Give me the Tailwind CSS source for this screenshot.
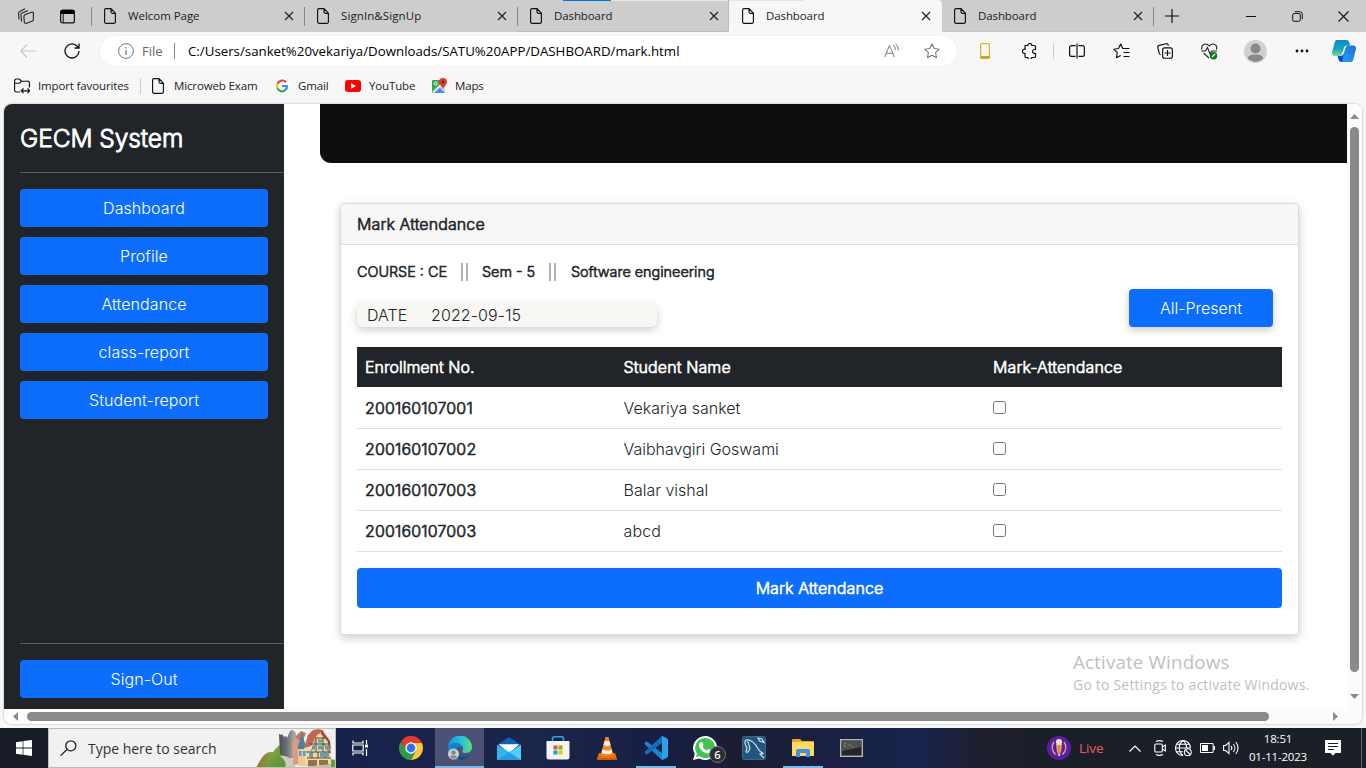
<!DOCTYPE html>
<html lang="en">
<head>
<meta charset="utf-8">
<title>Dashboard</title>
<script src="https://cdn.jsdelivr.net/npm/@tailwindcss/browser@4"></script>
</head>
<body class="w-[1366px] h-[768px] overflow-hidden bg-[#f7f7f7] font-['Open_Sans','Noto_Sans',sans-serif] text-[#1b1b1b] whitespace-nowrap">
<svg class="hidden">
  <symbol id="page" viewBox="0 0 12 16"><path d="M2 .6h5l4.400 4.600v8.600a1.500 1.500 0 0 1-1.500 1.600H2.100A1.500 1.500 0 0 1 .6 13.800V2.100A1.500 1.500 0 0 1 2 .6zM7 .8v3a1.500 1.500 0 0 0 1.500 1.500h2.800" fill="none" stroke="#111" stroke-width="1.150"/></symbol>
  <symbol id="x" viewBox="0 0 10 10"><path d="M1 1l8 8M9 1l-8 8" fill="none" stroke="#222" stroke-width="1.200"/></symbol>
</svg>
<div class="h-screen flex flex-col">
  <!-- tab strip -->
  <div class="relative h-8 flex shrink-0 bg-[#cdcdcd] text-[11.500px]">
    <div class="absolute left-[563px] top-0 w-[241px] h-px bg-[#e5e5e5]"><div class="w-12 h-px bg-[#0078d7]"></div></div>
    <div class="w-[91px] flex items-center pl-[18px] gap-[26px]">
      <svg class="w-4 h-4" viewBox="0 0 16 16" fill="none" stroke="#222" stroke-width="1.100"><path d="M1 11.500L.6 5.500C.5 4.500 1 3.800 1.800 3.400L7 .8M3.600 13.500L3 7c-.1-1 .4-1.700 1.200-2L10 2.500"/><path d="M7.300 6.500l6.200-2.300c1-.3 2 .2 2 1.200l-.2 6c0 .8-.5 1.500-1.300 1.800l-5.500 2c-1.200.4-2.100-.2-2.200-1.200l-.4-5.300c0-1 .5-1.800 1.400-2.200z"/></svg>
      <svg class="w-[15px] h-[15px]" viewBox="0 0 15 15"><rect x=".6" y="1.100" width="13.800" height="12.800" rx="2" fill="none" stroke="#111" stroke-width="1.200"/><path d="M.6 5V3A2 2 0 0 1 2.600 1h9.800a2 2 0 0 1 2 2v2z" fill="#000"/><path d="M3.200 5v8.500" stroke="#111"/></svg>
    </div>
    <div class="w-[213px] relative flex items-center pl-[13px] pr-[10px] before:absolute before:left-0 before:top-[7px] before:w-px before:h-[19px] before:bg-[#888]"><svg class="w-3 h-4"><use href="#page"/></svg><span class="ml-3 flex-1 tracking-[-.05px]">Welcom Page</span><svg class="w-[10px] h-[10px]"><use href="#x"/></svg></div>
    <div class="w-[213px] relative flex items-center pl-[13px] pr-[10px] before:absolute before:left-0 before:top-[7px] before:w-px before:h-[19px] before:bg-[#888]"><svg class="w-3 h-4"><use href="#page"/></svg><span class="ml-3 flex-1 tracking-[.1px]">SignIn&amp;SignUp</span><svg class="w-[10px] h-[10px]"><use href="#x"/></svg></div>
    <div class="w-[212px] relative flex items-center pl-[13px] pr-[9px] rounded-br-[4px] border-r border-b border-[#bbb] before:absolute before:left-0 before:top-[7px] before:w-px before:h-[19px] before:bg-[#888]"><svg class="w-3 h-4"><use href="#page"/></svg><span class="ml-3 flex-1 tracking-[-.1px]">Dashboard</span><svg class="w-[10px] h-[10px]"><use href="#x"/></svg></div>
    <div class="w-[213px] flex items-center pl-[13px] pr-[11px] bg-[#f7f7f7] rounded-t-[4px]"><svg class="w-3 h-4"><use href="#page"/></svg><span class="ml-3 flex-1 tracking-[-.1px]">Dashboard</span><svg class="w-[10px] h-[10px]"><use href="#x"/></svg></div>
    <div class="w-[212px] flex items-center pl-3 pr-[11px] border-b border-[#c4c4c4]"><svg class="w-3 h-4"><use href="#page"/></svg><span class="ml-3 flex-1 tracking-[-.1px]">Dashboard</span><svg class="w-[10px] h-[10px]"><use href="#x"/></svg></div>
    <div class="flex-1 flex items-center relative before:absolute before:left-[-1px] before:top-[7px] before:w-px before:h-[19px] before:bg-[#888]">
      <svg class="ml-[11px] w-[14px] h-[14px]" viewBox="0 0 14 14"><path d="M7 0v14M0 7h14" stroke="#111" stroke-width="1.200"/></svg>
      <svg class="ml-[67px] w-[10px] h-[10px]" viewBox="0 0 10 10"><path d="M0 5.500h10" stroke="#111"/></svg>
      <svg class="ml-9 w-[11px] h-[11px]" viewBox="0 0 11 11" fill="none" stroke="#111"><rect x=".7" y="2.500" width="7.600" height="7.800" rx="1.500"/><path d="M2.800 .7h5A2.500 2.500 0 0 1 10.300 3.200v5"/></svg>
      <svg class="ml-[35px] w-[11px] h-[11px]" viewBox="0 0 11 11"><path d="M.5.5l10 10M10.500.5l-10 10" stroke="#111" stroke-width="1.100"/></svg>
    </div>
  </div>
  <!-- address row -->
  <div class="h-[38px] shrink-0 flex items-center">
    <svg class="ml-5 w-4 h-[14px]" viewBox="0 0 16 14" fill="none" stroke="#c6c6c6" stroke-width="1.100"><path d="M7 .5L.8 7 7 13.500M.8 7H16"/></svg>
    <svg class="ml-[28px] w-4 h-4" viewBox="0 0 16 16" fill="none" stroke="#111" stroke-width="1.300"><path d="M15 8a7 7 0 1 1-2.300-5.200L15 5M15 .5V5h-4.500"/></svg>
    <div class="ml-5 w-[857px] h-[30px] rounded-full bg-white shadow-[0_0_2px_rgba(0,0,0,.08)] flex items-center">
      <svg class="ml-[18px] w-4 h-4" viewBox="0 0 16 16" fill="none" stroke="#767676"><circle cx="8" cy="8" r="7.400"/><path d="M8 7v5M8 4v1.500" stroke-width="1.300"/></svg>
      <span class="ml-2 w-[21px] text-[13px] pt-px text-[#666]">File</span>
      <span class="ml-[11px] w-px h-4 bg-[#888]"></span>
      <span class="ml-[13px] flex-1 pt-px text-[13.300px] tracking-[-.01px] text-black">C:/Users/sanket%20vekariya/Downloads/SATU%20APP/DASHBOARD/mark.html</span>
      <svg class="w-4 h-4" viewBox="0 0 16 16" fill="none" stroke="#777"><path d="M.6 14L5.500 2.500 10.400 14M2.200 10.300h6.600M9.500 2.300a5 5 0 0 1 1.800 4.500M11.700.9a8 8 0 0 1 2.500 6.500"/></svg>
      <svg class="ml-6 mr-[17px] w-4 h-4" viewBox="0 0 16 16" fill="none" stroke="#777" stroke-width="1.100"><path d="M8 .9l2.200 4.600 5 .7-3.600 3.500.9 5L8 12.300l-4.500 2.400.9-5L.8 6.200l5-.7z" stroke-linejoin="round"/></svg>
    </div>
    <svg class="ml-[23px] w-[10px] h-4" viewBox="0 0 10 16"><rect x=".6" y=".6" width="8.800" height="14.800" rx="1" fill="none" stroke="#dcb32c" stroke-width="1.200"/><path d="M.6 13h8.800v2.500H.6z" fill="#cfa21b"/></svg>
    <svg class="ml-[32px] w-[15px] h-4" viewBox="0 0 15 16" fill="none" stroke="#111" stroke-width="1.200"><path d="M3 2.500h2.800a2 2 0 0 1 4 0H12.500a1 1 0 0 1 1 1v3h-1a1.900 1.900 0 0 0 0 3.800h1v3.200a1 1 0 0 1-1 1H9.800a2 2 0 0 1-4 0H4a1 1 0 0 1-1-1v-3.200a2 2 0 1 1 0-3.800z" stroke-linejoin="round"/></svg>
    <span class="ml-4 w-px h-4 bg-[#ccc]"></span>
    <svg class="ml-[15px] w-4 h-4" viewBox="0 0 16 16" fill="none" stroke="#111" stroke-width="1.200"><path d="M6.500 2.600h-4A1.900 1.900 0 0 0 .6 4.500v7a1.900 1.900 0 0 0 1.900 1.900h4M9.500 2.600h4a1.900 1.900 0 0 1 1.900 1.900v7a1.900 1.900 0 0 1-1.900 1.900h-4M8 .5v15"/></svg>
    <svg class="ml-[28px] w-[17px] h-4" viewBox="0 0 17 16" fill="none" stroke="#111" stroke-width="1.150"><path d="M10.500 5.500H9.800L7.700 1 5.500 5.500.8 6.200l3.500 3.500-.9 5 4.300-2.300M10.500 5.500H16.500M10.500 9.500h6M10.500 13.500h6" stroke-linejoin="round"/></svg>
    <svg class="ml-[27px] w-4 h-4" viewBox="0 0 16 16" fill="none" stroke="#111" stroke-width="1.150"><rect x="5.600" y="4.800" width="9.800" height="10.400" rx="2"/><path d="M10.500 7v6M7.500 10h6M3.500 12L2.300 10.500.8 4.500C.6 3.500 1 2.700 2 2.400L9 .7c1-.2 2 .3 2.300 1.400v.7"/></svg>
    <svg class="ml-7 w-[17px] h-[17px]" viewBox="0 0 17 17" fill="none" stroke="#222" stroke-width="1.100"><path d="M1 6.500C0 3.500 2 1 4.500 1 6.500 1 7.500 2 8.300 3 9 2 10.200 1 12.200 1c2.500 0 4.300 2.500 3.300 5.500M0 8h4.500L6.500 4.500 9 11l1.800-3H16M2.500 10L8 15"/><circle cx="12.500" cy="12.700" r="3.700" fill="#107c10" stroke="none"/><path d="M11 14l3-3" stroke="#fff" stroke-width="1.300"/></svg>
    <svg class="ml-[26px] w-[23px] h-[23px]" viewBox="0 0 23 23"><circle cx="11.500" cy="11.500" r="11.500" fill="#d2d0ce"/><circle cx="11.500" cy="8.500" r="5" fill="#8a8886"/><path d="M3.700 18.200C5 15 8 14.500 11.500 14.500S18 15 19.300 18.200c-4 4.600-11.600 4.600-15.600 0z" fill="#8a8886"/></svg>
    <svg class="ml-7 w-[14px] h-1" viewBox="0 0 14 4" fill="#111"><circle cx="2" cy="2" r="1.400"/><circle cx="7" cy="2" r="1.400"/><circle cx="12" cy="2" r="1.400"/></svg>
    <svg class="ml-[23px] w-6 h-[22px]" viewBox="0 0 24 22"><defs><linearGradient id="ca" x2="0" y2="1"><stop stop-color="#0c85cf"/><stop offset=".55" stop-color="#14a6b8"/><stop offset="1" stop-color="#74dc8e"/></linearGradient><linearGradient id="cb" x1="1" x2="0" y2="1"><stop stop-color="#2468e0"/><stop offset="1" stop-color="#17b1ef"/></linearGradient></defs><path d="M5 0h9c2 0 3 1 3.500 3l.7 2.500h-3C13 5.500 12.200 6.500 11.600 9L10 14c-.6 1.600-1.500 2-3 2H3C.5 16-.4 14.500.2 12L2.500 3C3 1 3.700 0 5 0z" fill="url(#ca)"/><path d="M19 22h-9c-2 0-3-1-3.500-3L5.800 16h2.500c2 0 3-1 3.700-3.500L13.500 8c.6-1.700 1.500-2.500 3-2.500H21c2.500 0 3.400 1.500 2.800 4L21.500 19c-.5 2-1.200 3-2.500 3z" fill="url(#cb)"/><path d="M5.800 16h2.500c1.500 0 2.500-.6 3.200-2L10.300 22C8 22 7 21 6.500 19z" fill="#1744c9"/></svg>
  </div>
  <!-- bookmarks -->
  <div class="h-[34px] shrink-0 flex items-center pb-[3px] text-[11.500px] tracking-[-.14px]">
    <svg class="ml-[14px] w-4 h-4" viewBox="0 0 16 16" fill="none" stroke="#111" stroke-width="1.150"><path d="M6 14H2.500A1.900 1.900 0 0 1 .6 12V3A1.900 1.900 0 0 1 2.500 1h2.800L7.500 3.200h6A1.900 1.900 0 0 1 15.400 5v4.500M.6 5.200h5L7.500 3.200M7.500 12.800h8M9.500 10.500l-2.300 2.300L9.500 15M13.500 10.500l2.200 2.300L13.500 15"/></svg>
    <span class="ml-2 w-[92px]">Import favourites</span><span class="ml-[10px] w-px h-4 bg-[#ccc]"></span>
    <svg class="ml-[11px] w-3 h-4"><use href="#page"/></svg><span class="ml-[10px] w-[84px]">Microweb Exam</span>
    <svg class="ml-4 w-4 h-4" viewBox="0 0 16 16"><circle cx="8" cy="8" r="8" fill="#fff"/><g fill="none" stroke-width="2.200"><path d="M12.100 4.200A5.200 5.200 0 0 0 3.500 5.700" stroke="#ea4335"/><path d="M3.500 5.700a5 5 0 0 0 0 4.600" stroke="#fbbc05"/><path d="M3.500 10.300a5 5 0 0 0 7.900 1.700" stroke="#34a853"/><path d="M11.400 12A5 5 0 0 0 12.900 8H8" stroke="#4285f4"/></g></svg>
    <span class="ml-2 w-[30px]">Gmail</span>
    <svg class="ml-[17px] w-4 h-3" viewBox="0 0 16 12"><rect width="16" height="12" rx="3" fill="#f00"/><path d="M6 3.200v5.600L11 6z" fill="#fff"/></svg>
    <span class="ml-2 w-[46px]">YouTube</span>
    <svg class="ml-[17px] w-[15px] h-4" viewBox="0 0 15 16"><rect y="2" width="13" height="13" rx="1" fill="#34a853"/><path d="M1 15l6-6 6 6z" fill="#4a88f0"/><path d="M0 14L12 2.500l1.500 2L2 15z" fill="#e9e5d8"/><path d="M7 9l6 6V9l-3-2z" fill="#c9d4e4"/><circle cx="3.700" cy="5.500" r="1.500" fill="none" stroke="#fff"/><path d="M11 0a4 4 0 0 1 4 4c0 2.500-2.700 3.500-4 7-1.300-3.500-4-4.500-4-7a4 4 0 0 1 4-4z" fill="#e33b2e"/><circle cx="11" cy="4" r="1.400" fill="#8b1a12"/></svg>
    <span class="ml-2">Maps</span>
  </div>
  <!-- web view -->
  <div class="ml-1 w-[1358px] h-[620px] shrink-0 rounded-lg overflow-hidden bg-[#fcfcfc] shadow-[0_0_2px_1px_rgba(0,0,0,.13)] flex flex-col font-['Inter',sans-serif] font-light text-base text-[#212529]">
    <div class="h-[605px] flex">
      <aside class="w-[280px] bg-[#212529] pl-4 flex flex-col text-white">
        <h1 class="h-[68px] pt-4 text-[24.500px] leading-9 tracking-[-.07px] [-webkit-text-stroke:.9px_white]">GECM System</h1>
        <div class="h-px bg-[#5b5e61]"></div>
        <nav class="mt-4 mr-4 flex flex-col gap-[10px] text-center leading-[38px] tracking-[.08px] flex-1">
          <a class="h-[38px] rounded bg-[#0d6efd]">Dashboard</a>
          <a class="h-[38px] rounded bg-[#0d6efd]">Profile</a>
          <a class="h-[38px] rounded bg-[#0d6efd]">Attendance</a>
          <a class="h-[38px] rounded bg-[#0d6efd]">class-report</a>
          <a class="h-[38px] rounded bg-[#0d6efd]">Student-report</a>
        </nav>
        <div class="h-px bg-[#5b5e61]"></div>
        <a class="mt-4 mr-4 mb-[11px] h-[38px] rounded bg-[#0d6efd] text-center leading-[38px] tracking-[.08px]">Sign-Out</a>
      </aside>
      <main class="w-[1063px] bg-white">
        <div class="ml-9 h-[59px] rounded-bl-[11px] bg-[#0c0f0e]"></div>
        <section class="ml-14 mt-10 w-[959px] h-[432px] border border-[#dcdcdc] rounded bg-white shadow-[0_3px_10px_rgba(0,0,0,.2)]">
          <header class="h-[41px] px-4 leading-10 bg-[#f7f7f7] border-b border-[#dcdcdc] rounded-t tracking-[.09px] [-webkit-text-stroke:.65px]">Mark Attendance</header>
          <div class="px-4">
            <div class="mt-4 h-[22px] flex items-center text-[14.400px] [-webkit-text-stroke:.6px]">
              <span class="w-[90px]">COURSE : CE</span>
              <span class="ml-[14px] w-[7px] h-[18px] border-x-2 border-[#b2b2b2]"></span>
              <span class="ml-[14px] w-[53px]">Sem - 5</span>
              <span class="ml-[14px] w-[7px] h-[18px] border-x-2 border-[#b2b2b2]"></span>
              <span class="ml-[15px]">Software engineering</span>
            </div>
            <div class="h-[64px] flex justify-between">
              <div class="mt-5 w-[300px] h-6 rounded-md bg-[#f8f7f3] shadow-[0_3px_8px_rgba(0,0,0,.2)] pl-[10px] flex leading-6"><span class="w-[64px]">DATE</span><span class="tracking-[.1px]">2022-09-15</span></div>
              <button class="mt-[6px] mr-[9px] w-[144px] h-[38px] rounded bg-[#0d6efd] text-white shadow-[0_3px_8px_rgba(0,0,0,.2)]">All-Present</button>
            </div>
            <div class="grid grid-cols-[258.500px_369.500px_1fr] items-center">
              <div class="contents text-white tracking-[.1px] [-webkit-text-stroke:.65px_white]"><div class="h-10 leading-10 pl-2 bg-[#212529] tracking-normal">Enrollment No.</div><div class="h-10 leading-10 pl-2 bg-[#212529]">Student Name</div><div class="h-10 leading-10 pl-2 bg-[#212529]">Mark-Attendance</div></div>
              <div class="h-[42px] leading-[42px] pl-2 border-b border-[#dee2e6] tracking-[.15px] [-webkit-text-stroke:.65px]">200160107001</div><div class="h-[42px] leading-[42px] pl-2 border-b border-[#dee2e6]">Vekariya sanket</div><div class="h-[42px] pl-2 flex items-center border-b border-[#dee2e6]"><input type="checkbox" class="w-[13px] h-[13px]"></div>
              <div class="h-[41px] leading-10 pl-2 border-b border-[#dee2e6] tracking-[.15px] [-webkit-text-stroke:.65px]">200160107002</div><div class="h-[41px] leading-10 pl-2 border-b border-[#dee2e6]">Vaibhavgiri Goswami</div><div class="h-[41px] pl-2 pb-px flex items-center border-b border-[#dee2e6]"><input type="checkbox" class="w-[13px] h-[13px]"></div>
              <div class="h-[41px] leading-10 pl-2 border-b border-[#dee2e6] tracking-[.15px] [-webkit-text-stroke:.65px]">200160107003</div><div class="h-[41px] leading-10 pl-2 border-b border-[#dee2e6]">Balar vishal</div><div class="h-[41px] pl-2 pb-px flex items-center border-b border-[#dee2e6]"><input type="checkbox" class="w-[13px] h-[13px]"></div>
              <div class="h-[41px] leading-10 pl-2 border-b border-[#dee2e6] tracking-[.15px] [-webkit-text-stroke:.65px]">200160107003</div><div class="h-[41px] leading-10 pl-2 border-b border-[#dee2e6] tracking-[.15px]">abcd</div><div class="h-[41px] pl-2 pb-px flex items-center border-b border-[#dee2e6]"><input type="checkbox" class="w-[13px] h-[13px]"></div>
            </div>
            <button class="mt-4 w-full h-10 rounded bg-[#0d6efd] text-white tracking-[.09px] [-webkit-text-stroke:.65px_white]">Mark Attendance</button>
          </div>
        </section>
        <div class="absolute left-[1073px] top-[651px] font-['Open_Sans'] font-normal text-[#c0c0c0]">
          <p class="text-[18.800px] leading-[22px] tracking-[.15px]">Activate Windows</p>
          <p class="text-[14px] leading-[23px] tracking-[.2px]">Go to Settings to activate Windows.</p>
        </div>
      </main>
      <div class="w-[15px] flex flex-col items-center bg-[#fcfcfc]">
        <svg class="mt-[10px] w-[9px] h-[5px]" viewBox="0 0 9 5"><path d="M0 5L4.500 0 9 5z" fill="#8a8a8a"/></svg>
        <div class="mt-2 w-[9px] h-[545px] rounded-full bg-[#8a8a8a]"></div>
        <svg class="mt-[22px] w-[9px] h-[5px]" viewBox="0 0 9 5"><path d="M0 0L4.500 5 9 0z" fill="#8a8a8a"/></svg>
      </div>
    </div>
    <div class="h-[15px] flex items-center">
      <svg class="ml-[9px] w-[5px] h-[9px]" viewBox="0 0 5 9"><path d="M5 0L0 4.500 5 9z" fill="#8a8a8a"/></svg>
      <div class="ml-[9px] w-[1242px] h-[9px] rounded-full bg-[#8a8a8a]"></div>
      <svg class="ml-16 w-[5px] h-[9px]" viewBox="0 0 5 9"><path d="M0 0l5 4.500L0 9z" fill="#8a8a8a"/></svg>
    </div>
  </div>
  <!-- taskbar -->
  <div class="mt-1 h-10 shrink-0 flex text-white bg-[linear-gradient(90deg,#191d27_0px,#191d27_48px,#18214b_336px,#1b2549_540px,#171e43_660px,#1b1e31_740px,#1a2043_820px,#17234c_920px,#1e202f_980px,#1b1f28_1040px,#1b1f26_1366px)]">
    <div class="w-12 flex items-center justify-center"><svg class="w-4 h-4" viewBox="0 0 16 16" fill="#fff"><path d="M0 2.200l6.700-1v6.400H0zM7.400 1.100L16 0v7.600H7.400zM0 8.400h6.700v6.400l-6.700-1zM7.400 8.400H16V16l-8.600-1.200z"/></svg></div>
    <div class="w-72 bg-[#f1f1f1] border border-[#bdbdbd] flex items-center overflow-hidden">
      <svg class="ml-[11px] w-[17px] h-4" viewBox="0 0 17 16" fill="none" stroke="#222" stroke-width="1.300"><circle cx="10.800" cy="5.800" r="5"/><path d="M7.200 9.300L.6 15.600"/></svg>
      <span class="ml-[11px] flex-1 pt-px text-[14px] tracking-[-.02px] text-[#333]">Type here to search</span>
      <svg class="w-[79px] h-[39px]" viewBox="0 0 79 39"><defs><linearGradient id="hill" x2="1"><stop stop-color="#8a7a3c"/><stop offset="1" stop-color="#93b044"/></linearGradient><linearGradient id="hill2" x2="1" y2="1"><stop stop-color="#8fb04a"/><stop offset="1" stop-color="#4b8a32"/></linearGradient><linearGradient id="rock" x2="1"><stop stop-color="#4d5053"/><stop offset=".45" stop-color="#6d7073"/><stop offset="1" stop-color="#b3b4b4"/></linearGradient></defs>
        <path d="M0 39C5 29 9 23 15 23c6 0 12 8 14 16z" fill="url(#hill)"/><path d="M9 39c4-9 9-20 15-23 8 0 12 12 13 23z" fill="url(#hill2)"/><path d="M66 39c2-8 8-10 13-8v8z" fill="#659c35"/>
        <path d="M23 5l2 1 1-1 2 3 2-1 1 2 3-7 3-1 3 3v25H29l-5-4z" fill="url(#rock)"/>
        <path d="M24 27c4-1 9 1 13 4l3 8H29c2-5-1-9-5-12z" fill="#cfcabb"/>
        <path d="M36 14l4-6 5 5v22l-8 1z" fill="#d99c86"/><path d="M39 8l6-6 5 2-4 10z" fill="#c07763"/>
        <path d="M42 17l3-9 1-6 1 6 3 9v5h-8z" fill="#4c7fa0"/><path d="M42 20h9v17h-9z" fill="#ecca92"/>
        <path d="M48 20L52 6l8-5h6l7 9 2 12v13l-25 3z" fill="#f1d8a8"/>
        <path d="M48 19l4-13 5-5c4-1 8-1 11 1l-7 4-6 11z" fill="#bf6753"/><path d="M66 1l8 11 1 10-3-9-7-8z" fill="#96503f"/>
        <path d="M54 15h19M50 23h25M59 9h10M60 10v13M67 8v15M73 13v11M51 29h24M56 23v6M62 23v6M69 23v6" stroke="#5d452d" stroke-width="1" fill="none"/><path d="M55 22l4-6M68 15l4 7M61 9l-3 5" stroke="#8d6a45" stroke-width=".9"/>
        <path d="M56 16.500h3v4h-3zM62 16.500h4v4h-4zM69 16.500h3v4h-3zM62 10.500h4v3h-4zM43 22h2.500v5H43zM47 22h2.500v5H47zM53 24h3v4h-3zM64 24h4v4h-4zM70 24h3v4h-3z" fill="#4ea3cc"/><path d="M52 31h9v6h-9zM63 31h9v5h-9z" fill="#93724b"/><path d="M48 38l27-3v4H48z" fill="#c9bd9c"/></svg>
    </div>
    <div class="w-[48px] flex items-center justify-center"><svg class="w-4 h-4" viewBox="0 0 16 16" fill="none" stroke="#fff" stroke-width="1.200"><path d="M1 .5V3h10V.5M1 15.500V13h10v2.500M.8 5h10.400v6H.8zM14.500 0v4M14.500 9v7"/><path d="M13 4.500h3v3h-3z" fill="#fff" stroke="none"/></svg></div>
    <div class="ml-[2px] w-[49px] flex items-center justify-center"><svg class="w-6 h-6" viewBox="0 0 24 24"><path d="M12 12H8L1.600 6A12 12 0 0 0 12 24l5-9z" fill="#2b9b48"/><path d="M12 7h10.900A12 12 0 0 1 12 24l5-9z" fill="#fcc934"/><path d="M2 5.500L6.800 14 12 7h10.900A12 12 0 0 0 2 5.500z" fill="#e33b2e"/><circle cx="12" cy="12" r="5.700" fill="#fff"/><circle cx="12" cy="12" r="4.400" fill="#2f75e8"/></svg></div>
    <div class="w-[49px] flex items-center justify-center bg-[#4a5174] border-b-2 border-[#76b9ed] pt-[2px]"><svg class="w-6 h-6" viewBox="0 0 24 24"><defs><linearGradient id="ed" x2="1"><stop stop-color="#1395df"/><stop offset=".5" stop-color="#29bdd8"/><stop offset="1" stop-color="#58dd79"/></linearGradient></defs><path d="M0 12A12 12 0 0 1 24 11c0 4-3 6-6.500 6-3 0-3.800-1.200-3-2.300 1.500-2 .5-5.700-3.500-5.700C5 9 1 11 0 12z" fill="url(#ed)"/><path d="M0 12c1-4 6-6 10-5 3 .7 5 3 4.800 5C14 10 8 10 7.500 15c-.5 4 4 8 9 7-3 1.600-6.500 2.500-9 1.200C3 21.500 0 17 0 12z" fill="#1183cd"/><path d="M9.700 11C6 14 8 21 15 21c3 0 5-1 7-3-2 4-6 6-10 6-5-1-8-8-2.300-13z" fill="#124c91"/><circle cx="5.500" cy="18" r="5.500" fill="#d0cfce"/><circle cx="5.500" cy="16.500" r="2.200" fill="#8a8886"/><path d="M2 21c1-2.500 6-2.500 7 0-2 2.300-5 2.300-7 0z" fill="#8a8886"/></svg></div>
    <div class="w-[49px] flex items-center justify-center"><svg class="w-6 h-[23px]" viewBox="0 0 24 23"><path d="M0 8L12 0l12 8v15H0z" fill="#1261b2"/><path d="M2 7.500h20L12 16z" fill="#fff"/><path d="M0 8l12 7L24 8v15H0z" fill="#32b5ed"/><path d="M2 7.500h20L12 14.500z" fill="#fff"/><path d="M24 8v15L0 23z" fill="#56cbfa"/><path d="M0 23l12-8 12 8z" fill="#239ee0"/></svg></div>
    <div class="w-[49px] flex items-center justify-center"><svg class="w-6 h-6" viewBox="0 0 24 24"><path d="M6.500 6V2.200c0-.8.6-1.400 1.400-1.400h8.200c.8 0 1.400.6 1.400 1.400V6" fill="none" stroke="#25a5e7" stroke-width="1.600"/><path d="M.5 5h23v16a2.500 2.500 0 0 1-2.500 2.500H3A2.500 2.500 0 0 1 .5 21z" fill="#f5f5f5"/><path d="M7.500 9.500h4v4h-4z" fill="#f25022"/><path d="M12.500 9.500h4v4h-4z" fill="#7fba00"/><path d="M7.500 14.500h4v4h-4z" fill="#00a4ef"/><path d="M12.500 14.500h4v4h-4z" fill="#ffb900"/></svg></div>
    <div class="w-[49px] flex items-center justify-center"><svg class="w-5 h-6" viewBox="0 0 20 24"><path d="M2 17h16l2 6H0z" fill="#e87409"/><path d="M8.500 1h3L16 18c-2 2.500-10 2.500-12 0z" fill="#f58b16"/><path d="M7.600 5h4.800l1.200 4c-2 1.500-5.200 1.500-7.200 0zM5.500 13c2 2 7 2 9 0l1 3.500c-2.500 2-8.500 2-11 0z" fill="#eee"/><path d="M0 22h20v2H0z" fill="#c45d05"/></svg></div>
    <div class="w-[49px] flex justify-center"><div class="w-10 flex items-center justify-center border-b-2 border-[#76b9ed] pt-[2px]"><svg class="w-6 h-6" viewBox="0 0 24 24"><path d="M18 0l6 3v18l-6 3L1 8.500c-.6-.6-.6-1.200 0-1.800l1.600-1.400L18 17z" fill="#1688d3"/><path d="M18 0v7L2.700 18.700 1 17.300c-.6-.6-.6-1.200 0-1.800z" fill="#1070b5"/><path d="M18 0l6 3v18l-6 3z" fill="#2ba1ee"/></svg></div></div>
    <div class="w-[49px] relative flex items-center justify-center"><svg class="w-6 h-6" viewBox="0 0 24 24"><path d="M12 0a12 12 0 1 1-5.700 22.500L0 24l1.700-6A12 12 0 0 1 12 0z" fill="#fff"/><path d="M12 2a10 10 0 1 1-5.500 18.300L3 21.200l1-3.500A10 10 0 0 1 12 2z" fill="#40c351"/><path d="M8 6l1.500.3 1 2.700-1 1.400c1 2 2.500 3.200 4.500 4l1.500-1.500 2.700 1.300c.2 2-1.300 3.400-3.400 3.300C10 17 6 12.500 6 9c0-1.500 1-2.700 2-3z" fill="#fff"/></svg><span class="absolute left-[29px] top-[18px] w-[17px] h-[17px] rounded-full bg-[#2b2d31] border border-[#777] text-[11px] leading-[15px] text-center font-semibold">6</span></div>
    <div class="w-[49px] flex items-center justify-center"><svg class="w-6 h-6" viewBox="0 0 24 24"><rect x=".5" y=".5" width="23" height="23" rx="2" fill="#22567e" stroke="#376c93"/><path d="M5.500 17L4 15.500 5 12C3 9 2 5 4 4c4-1 9 3 11 7 1.500 3 2.500 5 6.500 6.500l-3.500.5 4 4M5 5.500c2.500 1.500 1.500 4 3 7L6 16M16 2l1.500 3 4.500 1.500L20 3z" fill="none" stroke="#dcebf4" stroke-width="1.100"/></svg></div>
    <div class="w-[49px] flex justify-center"><div class="w-10 flex items-center justify-center border-b-2 border-[#76b9ed] pt-[2px]"><svg class="w-[22px] h-[18px]" viewBox="0 0 22 18"><path d="M0 1a1 1 0 0 1 1-1h7l2 2h11a1 1 0 0 1 1 1v14H0z" fill="#e8a918"/><path d="M0 3h22v14H0z" fill="#ffd867"/><path d="M4 18v-6a2 2 0 0 1 2-2h10a2 2 0 0 1 2 2v6h-4v-4H8v4z" fill="#3d92dc"/></svg></div></div>
    <div class="w-[49px] flex items-center justify-center"><svg class="w-[23px] h-[18px]" viewBox="0 0 23 18"><rect x=".7" y=".7" width="21.600" height="16.600" fill="#242626" stroke="#b6b6b6" stroke-width="1.400"/><path d="M2 2h19v6L2 12z" fill="#4d4f4f"/><path d="M6 4.500H4.500v3H6M8 5v.8M8 7v.5M9.500 4.500l1 3M11.500 8H14" fill="none" stroke="#909090" stroke-width=".8"/></svg></div>
    <div class="ml-auto w-[319px] flex items-center">
      <svg class="w-6 h-6 shrink-0" viewBox="0 0 24 24"><circle cx="12" cy="12" r="12" fill="#5a1ea5"/><path d="M7 6c-3 4-2 9 1.500 12.500M17 6c3 4 2 9-1.500 12.500" fill="none" stroke="#e6ad80" stroke-width="1.400"/><path d="M9 8h6l-1 8-.8 1v3h-2.400v-3l-.8-1z" fill="#e5ad5c"/><circle cx="12" cy="6" r="3" fill="#f7e4cb"/><path d="M12 9v8" stroke="#ab6d2f"/></svg>
      <span class="ml-2 w-6 text-[13.500px] tracking-[-.1px] text-[#ee5b5b]">Live</span>
      <svg class="ml-[26px] w-3 h-[7px] shrink-0" viewBox="0 0 12 7"><path d="M.5 6.500L6 1l5.500 5.500" fill="none" stroke="#fff" stroke-width="1.200"/></svg>
      <svg class="ml-[13px] w-3 h-4 shrink-0" viewBox="0 0 12 16" fill="none" stroke="#fff" stroke-width="1.100"><path d="M2 1.500C4 .5 7 .5 9 1.500M2 14.500c2 1 5 1 7 0"/><rect x=".8" y="4" width="7.500" height="8" rx="1"/><path d="M8.300 7l3-2v6l-3-2"/></svg>
      <svg class="ml-[9px] w-[17px] h-4 shrink-0" viewBox="0 0 17 16" fill="none" stroke="#fff" stroke-width="1.100"><path d="M8 15.500A7.500 7.500 0 1 1 15.500 8M8 .5c-5 4-5 11 0 15M8 .5C10 2 11.500 5 11.500 8M.5 8h15M1.500 4.300h13M1.500 11.700H8"/><circle cx="12.800" cy="12.200" r="3.400"/><path d="M10.500 10l4.600 4.500"/></svg>
      <svg class="ml-2 w-[15px] h-[10px] shrink-0" viewBox="0 0 15 10"><path d="M.5.5h12.600v9H.5z" fill="none" stroke="#fff"/><path d="M2 2h6v6H2zM13.500 3H15v4h-1.500z" fill="#fff"/></svg>
      <svg class="ml-2 w-4 h-[14px] shrink-0" viewBox="0 0 16 14" fill="none" stroke="#fff" stroke-width="1.100"><path d="M.6 4.500h2L6 1.500v11L2.600 9.500h-2zM8 5a3 3 0 0 1 0 4M10.300 3a6 6 0 0 1 0 8M12.700 1a9 9 0 0 1 0 12"/></svg>
      <div class="ml-[9px] w-[60px] text-center text-[11.500px] leading-[18px] tracking-[-.2px] flex flex-col items-center"><span>18:51</span><span>01-11-2023</span></div>
      <svg class="ml-[17px] w-4 h-4 shrink-0" viewBox="0 0 16 16"><path d="M0 0h16v13h-5.500L8 15.700 5.500 13H0z" fill="#fff"/><path d="M3 3.500h10M3 6.500h10M3 9.500h6" stroke="#1b1f26"/></svg>
      <span class="ml-auto mr-[4px] w-px h-10 bg-[#62666c]"></span>
    </div>
  </div>
</div>
</body>
</html>
